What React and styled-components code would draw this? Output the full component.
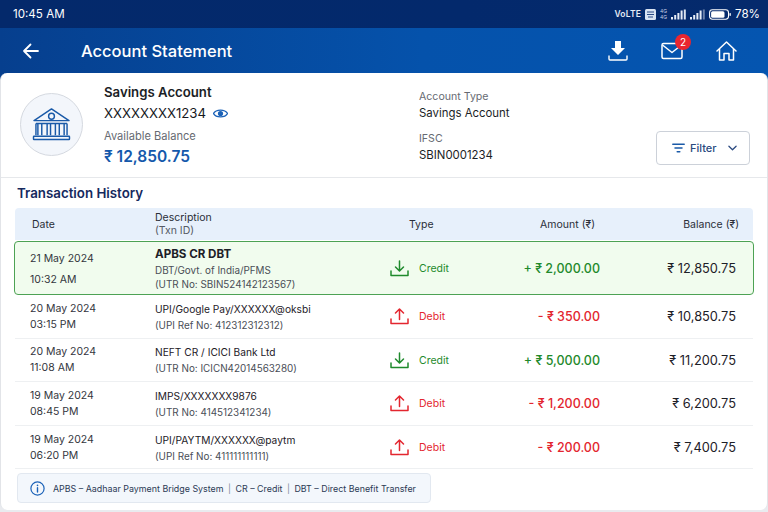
import React from 'react';
import styled, { createGlobalStyle } from 'styled-components';

const GlobalStyle = createGlobalStyle`
  html, body {
    margin: 0;
    padding: 0;
    width: 768px;
    height: 512px;
    overflow: hidden;
    background: #e9ebef;
    font-family: Inter, "Noto Sans", sans-serif;
  }
  * { box-sizing: border-box; }
`;

const Page = styled.div`
  width: 768px;
  height: 512px;
  display: flex;
  flex-direction: column;
  background: #e9ebef;
`;

const StatusBar = styled.div`
  height: 28px;
  flex: none;
  display: flex;
  align-items: center;
  justify-content: space-between;
  padding: 0 8px 0 13px;
  background: linear-gradient(90deg, #04296b, #03296c 60%, #052a6c);
  color: #fff;
  font-size: 11.6px;
`;

const StatusRight = styled.div`
  display: flex;
  align-items: center;
  gap: 4px;
`;

const Volte = styled.span`
  font-size: 8.5px;
  font-weight: 600;
  letter-spacing: 0.2px;
  color: #e6ecf6;
`;

const AppBar = styled.div`
  height: 52px;
  flex: none;
  margin-bottom: -7px;
  padding: 0 31px 7px 22px;
  display: flex;
  align-items: center;
  background: linear-gradient(90deg, #063f8e, #0552ab 55%, #0555b0);
  color: #fff;
`;

const Title = styled.div`
  margin-left: 41px;
  flex: 1;
  font-size: 16.5px;
  font-weight: 500;
`;

const BarIcons = styled.div`
  display: flex;
  align-items: center;
  gap: 33px;
`;

const IconSlot = styled.div`
  position: relative;
  display: flex;
`;

const Badge = styled.span`
  position: absolute;
  top: -8px;
  right: -8px;
  width: 16px;
  height: 16px;
  border-radius: 50%;
  background: #ea2530;
  color: #fff;
  font-size: 10px;
  display: flex;
  align-items: center;
  justify-content: center;
`;

const Card = styled.div`
  flex: 1;
  min-height: 0;
  margin-bottom: 2px;
  background: #fff;
  border-radius: 7px;
  border-left: 1px solid #e2e4e8;
  border-right: 1px solid #e2e4e8;
  display: flex;
  flex-direction: column;
`;

const Summary = styled.div`
  height: 105px;
  flex: none;
  display: flex;
  border-bottom: 1px solid #e6e8eb;
  padding: 20px 17px 0 19px;
`;

const BankBadge = styled.div`
  width: 63px;
  height: 63px;
  margin-right: 21px;
  flex: none;
  border-radius: 50%;
  background: #f3f6fb;
  border: 1px solid #d5d9e0;
  display: flex;
  align-items: center;
  justify-content: center;
`;

const AccountCol = styled.div`
  width: 315px;
  flex: none;
  margin-top: -10px;
`;

const AccountName = styled.div`
  font-size: 13.2px;
  font-weight: 600;
  line-height: 18px;
  color: #1b1e26;
`;

const AccountNo = styled.div`
  margin-top: 3px;
  display: flex;
  align-items: center;
  gap: 7px;
  font-size: 13.2px;
  line-height: 18px;
  color: #16181e;
`;

const Muted = styled.div`
  font-size: 10.6px;
  line-height: 15px;
  color: #666a72;
`;

const BalanceLabel = styled(Muted)`
  margin-top: 7px;
  font-size: 11.1px;
`;

const Balance = styled.div`
  margin-top: 3px;
  font-size: 15.5px;
  font-weight: 600;
  line-height: 20px;
  color: #1458ab;
`;

const MetaCol = styled.div`
  flex: 1;
  margin-top: -4px;
`;

const MetaValue = styled.div`
  font-size: 11.4px;
  line-height: 16px;
  margin-top: 1px;
  margin-bottom: 10px;
  color: #1b1e26;
`;

const FilterBtn = styled.div`
  align-self: flex-start;
  margin-top: 38px;
  width: 94px;
  height: 34px;
  border: 1px solid #ccd1d9;
  border-radius: 4px;
  display: flex;
  align-items: center;
  padding-left: 15px;
  gap: 5px;
  color: #2b4a80;
  font-size: 11px;
  font-weight: 500;
`;

const FilterChevron = styled.span`
  margin-left: 6px;
  display: flex;
`;

const History = styled.div`
  flex: 1;
  padding: 0 14px;
`;

const HistoryTitle = styled.div`
  height: 30px;
  padding: 6px 2px 0 2px;
  font-size: 13.3px;
  font-weight: 600;
  line-height: 18px;
  color: #15295e;
`;

const columns = `grid-template-columns: 140px 225px 100px 126px 1fr;`;

const TableHead = styled.div`
  display: grid;
  ${columns}
  align-items: center;
  height: 32px;
  margin-bottom: 1px;
  background: #e7f0fb;
  border-radius: 4px 4px 0 0;
  color: #2a2e38;
  font-size: 10.5px;
  line-height: 13px;
`;

const HeadCell = styled.div`
  padding-left: ${(p) => p.$pad || 0}px;
  padding-right: ${(p) => p.$padRight || 0}px;
  text-align: ${(p) => (p.$right ? 'right' : 'left')};
`;

const HeadSub = styled.div`
  color: #555a64;
`;

const Row = styled.div`
  display: grid;
  ${columns}
  align-items: center;
  height: ${(p) => (p.$featured ? 54 : 43.6)}px;
  ${(p) =>
    p.$featured
      ? `
    margin: 0 -1px;
    background: #f1fcee;
    border: 1px solid #4da254;
    border-radius: 4px;
  `
      : `border-bottom: 1px solid #eef0f2; padding-top: 1px;`}
`;

const DateCell = styled.div`
  padding-left: 15px;
  padding-top: ${(p) => (p.$featured ? 1 : 0)}px;
  font-size: 10.5px;
  color: #33363d;
  line-height: ${(p) => (p.$featured ? 21 : 16)}px;
`;

const DescCell = styled.div`
  font-size: 9.9px;
  line-height: 15px;
  color: #2a2d34;
`;

const DescTitle = styled.div`
  font-size: ${(p) => (p.$featured ? 11.6 : 10.2)}px;
  font-weight: ${(p) => (p.$featured ? 700 : 400)};
  line-height: ${(p) => (p.$featured ? 17 : 16)}px;
  color: #1d2027;
`;

const DescSub = styled.div`
  color: #4a4e57;
  line-height: ${(p) => (p.$featured ? 14 : 16)}px;
`;

const TypeCell = styled.div`
  padding-left: 10px;
  display: flex;
  align-items: center;
  gap: 10px;
  font-size: 10.5px;
  color: ${(p) => (p.$credit ? '#1f8a2c' : '#e3262f')};
`;

const Amount = styled.div`
  text-align: right;
  font-size: 12.5px;
  font-weight: 500;
  padding-right: 6px;
  color: ${(p) => (p.$credit ? '#1f8a2c' : '#e3262f')};
`;

const RowBalance = styled.div`
  text-align: right;
  font-size: 12.8px;
  font-weight: 400;
  padding-right: 17px;
  color: #1d2027;
`;

const Legend = styled.div`
  margin: 4px 0 0 2px;
  width: 414px;
  height: 30px;
  background: #f3f7fc;
  border: 1px solid #e2e8f0;
  border-radius: 4px;
  display: flex;
  align-items: center;
  gap: 8px;
  padding-left: 12px;
  font-size: 8.9px;
  color: #2b3a55;
  white-space: nowrap;
`;

const LegendSep = styled.span`
  margin: 0 2px;
  color: #7d8797;
`;

const BankIcon = () => (
  <svg width="39" height="35" viewBox="0 0 40 36" fill="none" stroke="#1a5aa8" strokeWidth="1.5" strokeLinejoin="round">
    <path d="M20 2 L38 14 H2 Z" />
    <circle cx="20" cy="9.5" r="3" />
    <path d="M4 17 H36 M6 17 V29 M10 17 V29 M15.5 17 V29 M19 17 V29 M24 17 V29 M28 17 V29 M33 17 V29 M36 17 V29 M4 17 V29" />
    <rect x="1.5" y="30" width="37" height="3.5" rx="0.5" />
  </svg>
);

const EyeIcon = () => (
  <svg width="15" height="11" viewBox="0 0 15 11">
    <path d="M0.5 5.5 C3 1 12 1 14.5 5.5 C12 10 3 10 0.5 5.5 Z" fill="none" stroke="#1b62b8" strokeWidth="1.3" />
    <circle cx="7.5" cy="5.5" r="2.6" fill="#1b62b8" />
  </svg>
);

const BackArrow = () => (
  <svg width="18" height="18" viewBox="0 0 18 18" fill="none" stroke="#fff" strokeWidth="1.8" strokeLinecap="round" strokeLinejoin="round">
    <path d="M16 9 H2 M8.5 2.5 L2 9 L8.5 15.5" />
  </svg>
);

const DownloadBold = () => (
  <svg width="20" height="22" viewBox="0 0 20 22" fill="#fff">
    <path d="M7 1 H13 V8 H17 L10 15 L3 8 H7 Z" />
    <path d="M1 15.5 V19 Q1 20 2 20 H18 Q19 20 19 19 V15.5" fill="none" stroke="#fff" strokeWidth="1.4" />
  </svg>
);

const MailIcon = () => (
  <svg width="22" height="18" viewBox="0 0 22 18" fill="none" stroke="#fff" strokeWidth="1.5" strokeLinejoin="round">
    <rect x="1" y="1.5" width="20" height="15" rx="1.5" />
    <path d="M1.5 3 L11 10.5 L20.5 3" />
  </svg>
);

const HomeIcon = () => (
  <svg width="21" height="20" viewBox="0 0 21 20" fill="none" stroke="#fff" strokeWidth="1.5" strokeLinejoin="round">
    <path d="M1 10 L10.5 1 L20 10" strokeLinecap="round" />
    <path d="M3.5 8 V19 H8 V12.5 H13 V19 H17.5 V8" />
  </svg>
);

const SignalIcon = ({ dim }) => (
  <svg width="15" height="11" viewBox="0 0 15 11" fill="#e6ecf6">
    <rect x="0" y="8" width="2" height="2.5" />
    <rect x="3.2" y="6" width="2" height="4.5" />
    <rect x="6.4" y="4" width="2" height="6.5" />
    <rect x="9.6" y="1.5" width="2" height="9" />
    <rect x="12.8" y="0.5" width="2" height="10" opacity={dim ? 0.45 : 0.95} />
  </svg>
);

const BatteryIcon = () => (
  <svg width="22" height="11" viewBox="0 0 23 11">
    <rect x="0.6" y="0.6" width="19.8" height="9.8" rx="3" fill="none" stroke="#fff" strokeWidth="1.1" />
    <rect x="2.2" y="2.2" width="14" height="6.6" rx="1.6" fill="#fff" />
    <rect x="21.4" y="4" width="1.4" height="3" rx="0.6" fill="#fff" />
  </svg>
);

const SimIcon = () => (
  <svg width="11" height="11" viewBox="0 0 11 11">
    <rect width="11" height="11" rx="1.5" fill="#d9e3f2" />
    <path d="M2 3 H9 M2 5.5 H9 M3 8 H8" stroke="#2a4a86" strokeWidth="1" />
  </svg>
);

const NetLabel = styled.span`
  display: flex;
  flex-direction: column;
  font-size: 5px;
  line-height: 6px;
  color: #c7d3e8;
`;

const FilterIcon = () => (
  <svg width="13" height="11" viewBox="0 0 13 11" fill="none" stroke="#1a5aa8" strokeWidth="1.5" strokeLinecap="round">
    <path d="M0.8 1.2 H12.2 M3 5 H10 M5.2 8.8 H7.8" />
  </svg>
);

const ChevronIcon = () => (
  <svg width="9" height="6" viewBox="0 0 10 6" fill="none" stroke="#2b4a80" strokeWidth="1.4" strokeLinecap="round" strokeLinejoin="round">
    <path d="M1 1 L5 5 L9 1" />
  </svg>
);

const TrayIcon = ({ credit }) => {
  const color = credit ? '#1f8a2c' : '#e3262f';
  return (
    <svg width="19" height="17" viewBox="0 0 19 17" fill="none" stroke={color} strokeWidth="1.5" strokeLinecap="round" strokeLinejoin="round">
      <path d="M1 11 V15.5 H18 V11" />
      {credit ? <path d="M9.5 1 V10.5 M5.5 7 L9.5 11 L13.5 7" /> : <path d="M9.5 11.5 V1.5 M5.5 5 L9.5 1 L13.5 5" />}
    </svg>
  );
};

const InfoIconSvg = styled.svg`
  flex: none;
`;

const InfoIcon = () => (
  <InfoIconSvg width="15" height="15" viewBox="0 0 15 15" fill="none" stroke="#1b62b8" strokeWidth="1.2" strokeLinecap="round">
    <circle cx="7.5" cy="7.5" r="6.6" />
    <path d="M7.5 6.8 V11" strokeWidth="1.4" />
    <path d="M7.5 4.2 V4.4" strokeWidth="1.6" />
  </InfoIconSvg>
);

const rows = [
  { date: '21 May 2024', time: '10:32 AM', title: 'APBS CR DBT', lines: ['DBT/Govt. of India/PFMS', '(UTR No: SBIN524142123567)'], credit: true, amount: '+ ₹ 2,000.00', balance: '₹ 12,850.75', featured: true },
  { date: '20 May 2024', time: '03:15 PM', title: 'UPI/Google Pay/XXXXXX@oksbi', lines: ['(UPI Ref No: 412312312312)'], amount: '- ₹ 350.00', balance: '₹ 10,850.75' },
  { date: '20 May 2024', time: '11:08 AM', title: 'NEFT CR / ICICI Bank Ltd', lines: ['(UTR No: ICICN42014563280)'], credit: true, amount: '+ ₹ 5,000.00', balance: '₹ 11,200.75' },
  { date: '19 May 2024', time: '08:45 PM', title: 'IMPS/XXXXXXX9876', lines: ['(UTR No: 414512341234)'], amount: '- ₹ 1,200.00', balance: '₹ 6,200.75' },
  { date: '19 May 2024', time: '06:20 PM', title: 'UPI/PAYTM/XXXXXX@paytm', lines: ['(UPI Ref No: 411111111111)'], amount: '- ₹ 200.00', balance: '₹ 7,400.75' },
];

export default function App() {
  return (
    <Page>
      <GlobalStyle />
      <StatusBar>
        <span>10:45 AM</span>
        <StatusRight>
          <Volte>VoLTE</Volte>
          <SimIcon />
          <NetLabel><span>4G</span><span>4G</span></NetLabel>
          <SignalIcon />
          <SignalIcon dim />
          <BatteryIcon />
          <span>78%</span>
        </StatusRight>
      </StatusBar>
      <AppBar>
        <BackArrow />
        <Title>Account Statement</Title>
        <BarIcons>
          <IconSlot><DownloadBold /></IconSlot>
          <IconSlot><MailIcon /><Badge>2</Badge></IconSlot>
          <IconSlot><HomeIcon /></IconSlot>
        </BarIcons>
      </AppBar>
      <Card>
        <Summary>
          <BankBadge><BankIcon /></BankBadge>
          <AccountCol>
            <AccountName>Savings Account</AccountName>
            <AccountNo>XXXXXXXX1234 <EyeIcon /></AccountNo>
            <BalanceLabel>Available Balance</BalanceLabel>
            <Balance>₹ 12,850.75</Balance>
          </AccountCol>
          <MetaCol>
            <Muted>Account Type</Muted>
            <MetaValue>Savings Account</MetaValue>
            <Muted>IFSC</Muted>
            <MetaValue>SBIN0001234</MetaValue>
          </MetaCol>
          <FilterBtn>
            <FilterIcon />
            Filter
            <FilterChevron><ChevronIcon /></FilterChevron>
          </FilterBtn>
        </Summary>
        <History>
          <HistoryTitle>Transaction History</HistoryTitle>
          <TableHead>
            <HeadCell $pad={17}>Date</HeadCell>
            <HeadCell>Description<HeadSub>(Txn ID)</HeadSub></HeadCell>
            <HeadCell $pad={29}>Type</HeadCell>
            <HeadCell $right $padRight={11}>Amount (₹)</HeadCell>
            <HeadCell $right $padRight={14}>Balance (₹)</HeadCell>
          </TableHead>
          {rows.map((r) => (
            <Row key={r.title} $featured={r.featured}>
              <DateCell $featured={r.featured}>
                <div>{r.date}</div>
                <div>{r.time}</div>
              </DateCell>
              <DescCell>
                <DescTitle $featured={r.featured}>{r.title}</DescTitle>
                {r.lines.map((l) => (
                  <DescSub key={l} $featured={r.featured}>{l}</DescSub>
                ))}
              </DescCell>
              <TypeCell $credit={r.credit}>
                <TrayIcon credit={r.credit} />
                {r.credit ? 'Credit' : 'Debit'}
              </TypeCell>
              <Amount $credit={r.credit}>{r.amount}</Amount>
              <RowBalance>{r.balance}</RowBalance>
            </Row>
          ))}
          <Legend>
            <InfoIcon />
            <span>
              APBS – Aadhaar Payment Bridge System <LegendSep>|</LegendSep> CR – Credit <LegendSep>|</LegendSep> DBT – Direct Benefit Transfer
            </span>
          </Legend>
        </History>
      </Card>
    </Page>
  );
}
